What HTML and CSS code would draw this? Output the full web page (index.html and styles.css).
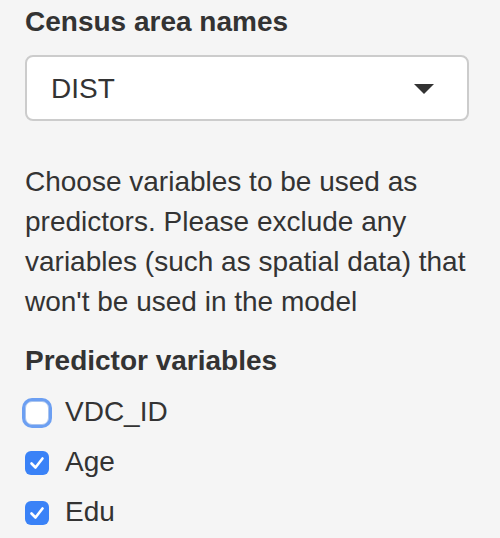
FILE: index.html
```html
<!DOCTYPE html>
<html>
<head>
<meta charset="utf-8">
<link rel="stylesheet" href="styles.css">
</head>
<body>
<div class="panel">
  <div class="group">
    <label class="control-label">Census area names</label>
    <div class="select">
      <span class="select-value">DIST</span>
      <svg class="caret" width="20" height="10" viewBox="0 0 20 10"><path d="M0 0 L20 0 L10 10 Z" fill="#333"/></svg>
    </div>
  </div>
  <p class="help">Choose variables to be used as predictors. Please exclude any variables (such as spatial data) that won't be used in the model</p>
  <div class="group">
    <label class="control-label">Predictor variables</label>
    <div class="checks">
      <div class="check">
        <span class="box box-focus"></span>
        <span class="check-label">VDC_ID</span>
      </div>
      <div class="check">
        <span class="box box-on"><svg width="24" height="24" viewBox="0 0 24 24"><path d="M6.5 12.5 L10.5 16.5 L17.5 7.5" fill="none" stroke="#fff" stroke-width="2.6" stroke-linecap="round" stroke-linejoin="round"/></svg></span>
        <span class="check-label">Age</span>
      </div>
      <div class="check">
        <span class="box box-on"><svg width="24" height="24" viewBox="0 0 24 24"><path d="M6.5 12.5 L10.5 16.5 L17.5 7.5" fill="none" stroke="#fff" stroke-width="2.6" stroke-linecap="round" stroke-linejoin="round"/></svg></span>
        <span class="check-label">Edu</span>
      </div>
    </div>
  </div>
</div>
</body>
</html>
```
FILE: styles.css
```css
html, body {
  margin: 0;
  padding: 0;
  background: #f5f5f5;
}
body {
  font-family: "Liberation Sans", Arial, Helvetica, sans-serif;
  font-size: 28px;
  line-height: 40px;
  color: #333;
}
.panel {
  padding: 2px 31px 0 25px;
}
.control-label {
  display: block;
  font-weight: bold;
  margin-bottom: 13px;
}
.select {
  box-sizing: border-box;
  height: 66px;
  background: #fff;
  border: 2px solid #ccc;
  border-radius: 8px;
  display: flex;
  align-items: center;
  justify-content: space-between;
  padding: 0 33px 0 24px;
}
.select-value {
  line-height: 40px;
  padding-top: 2px;
}
.caret {
  display: block;
  margin-top: 1px;
}
.help {
  margin: 41px 0 19px 0;
}
.control-label + .checks {
  margin-top: -2px;
}
.checks {
  display: flex;
  flex-direction: column;
  gap: 10px;
}
.check {
  display: flex;
  align-items: center;
  height: 40px;
}
.box {
  box-sizing: border-box;
  width: 24px;
  height: 24px;
  border-radius: 6px;
  flex: none;
  margin-right: 16px;
  margin-top: 1px;
}
.box svg {
  display: block;
}
.box-focus {
  background: #fff;
  border: 1px solid #a9c4ef;
  border-radius: 7px;
  box-shadow: 0 0 0 3px #6c9ff2;
}
.box-on {
  background: #3a82f7;
}
.check-label {
  padding-top: 0;
}
```
